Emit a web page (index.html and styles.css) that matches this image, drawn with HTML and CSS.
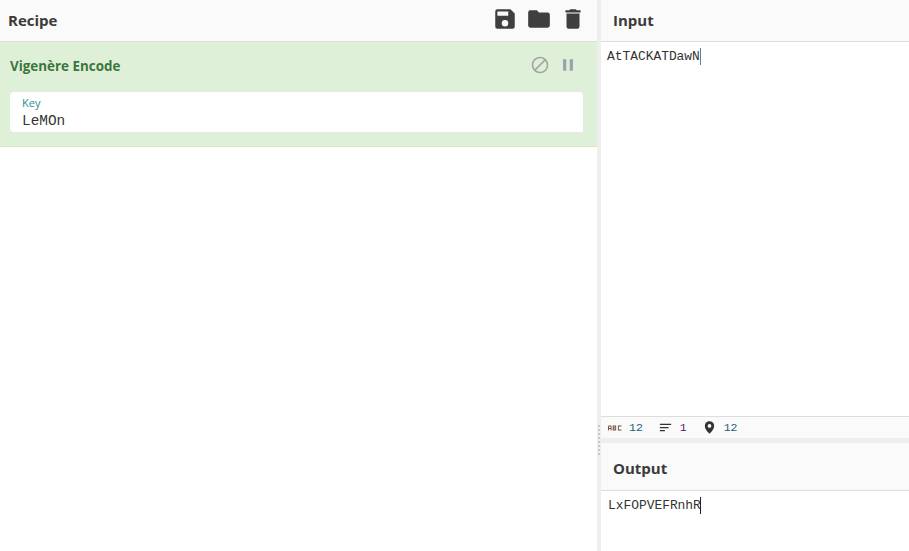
FILE: index.html
```html
<!DOCTYPE html>
<html lang="en">
<head>
<meta charset="utf-8">
<title>CyberChef</title>
<link rel="stylesheet" href="styles.css">
</head>
<body>
<div class="app">
  <section class="recipe">
    <header class="title-bar recipe-bar">
      <h1 class="title">Recipe</h1>
      <div class="actions">
        <svg class="act" viewBox="0 0 24 24"><path d="M17 3H5a2 2 0 0 0-2 2v14a2 2 0 0 0 2 2h14a2 2 0 0 0 2-2V7l-4-4zm-5 16a3 3 0 1 1 0-6 3 3 0 0 1 0 6zm3-10H5V5h10v4z"/></svg>
        <svg class="act" viewBox="0 0 24 24"><path d="M10 4H4a2 2 0 0 0-2 2v12a2 2 0 0 0 2 2h16a2 2 0 0 0 2-2V8a2 2 0 0 0-2-2h-8l-2-2z"/></svg>
        <svg class="act" viewBox="0 0 24 24"><path d="M6 19a2 2 0 0 0 2 2h8a2 2 0 0 0 2-2V7H6v12zM19 4h-3.500l-1-1h-5l-1 1H5v2h14V4z"/></svg>
      </div>
    </header>
    <div class="op">
      <div class="op-head">
        <span class="op-name">Vigenère Encode</span>
        <div class="op-controls">
          <svg class="ctl" viewBox="0 0 24 24"><path d="M12 2a10 10 0 1 0 0 20 10 10 0 0 0 0-20zM4 12a8 8 0 0 1 12.900-6.300L5.700 16.900A8 8 0 0 1 4 12zm8 8a8 8 0 0 1-4.900-1.700L18.300 7.100A8 8 0 0 1 12 20z"/></svg>
          <svg class="ctl pause" viewBox="0 0 24 24"><path d="M6 19h4V5H6v14zm8-14v14h4V5h-4z"/></svg>
        </div>
      </div>
      <div class="field">
        <label class="field-label">Key</label>
        <div class="field-value">LeMOn</div>
      </div>
    </div>
  </section>
  <div class="gutter"></div>
  <section class="io">
    <div class="pane input-pane">
      <header class="title-bar io-bar"><h2 class="title">Input</h2></header>
      <div class="text-area"><span class="text">AtTACKATDawN</span><span class="caret"></span></div>
      <footer class="status">
        <span class="stat">
          <svg class="stat-icon abc" viewBox="0 0 24 12" preserveAspectRatio="none"><path d="M0 11V3l1-2h4l1 2v8H4.500V8h-3v3zm1.500-5h3V3h-3zM8 1h5l1 1v3l-1 1 1 1v3l-1 1H8zm1.500 2v2h3V3zm0 4v2h3V7zM17 1h6v2h-4.500v6H23v2h-6z"/></svg>
          <span class="num">12</span>
        </span>
        <span class="stat">
          <svg class="stat-icon" viewBox="0 0 24 24"><path d="M3 6h18v2H3zM3 11h14v2H3zM3 16h8v2H3z"/></svg>
          <span class="num lines">1</span>
        </span>
        <span class="stat">
          <svg class="stat-icon" viewBox="0 0 24 24"><path d="M12 2a7.500 7.500 0 0 0-7.500 7.500C4.500 15 12 22 12 22s7.500-7 7.500-12.500A7.500 7.500 0 0 0 12 2zm0 10.500a3 3 0 1 1 0-6 3 3 0 0 1 0 6z"/></svg>
          <span class="num">12</span>
        </span>
      </footer>
    </div>
    <div class="io-gutter"></div>
    <div class="pane output-pane">
      <header class="title-bar io-bar"><h2 class="title">Output</h2></header>
      <div class="text-area"><span class="text">LxFOPVEFRnhR</span><span class="caret dark"></span></div>
    </div>
  </section>
</div>
</body>
</html>
```
FILE: styles.css
```css
* { box-sizing: border-box; }
html, body { margin: 0; height: 100%; overflow: hidden; background: #fff; }
.app { display: flex; width: 909px; height: 551px; font-family: "Open Sans", sans-serif; color: #333; }
.recipe { width: 597px; display: flex; flex-direction: column; }
.gutter { width: 4px; background: #eeeeee; position: relative; }
.gutter::after {
  content: ""; position: absolute; left: 1px; top: 425px; width: 2px; height: 32px;
  background: repeating-linear-gradient(to bottom, #c8c8c8 0 2px, transparent 2px 4px);
}
.io { width: 308px; display: flex; flex-direction: column; }
.title-bar {
  display: flex; align-items: center; justify-content: space-between;
  height: 42px; background: #fafafa; border-bottom: 1px solid #dddddd;
}
.recipe-bar { padding: 0 11px 0 8px; }
.io-bar { padding: 0 12px; }
.title { margin: 0 0 2px; font-size: 15px; font-weight: 700; color: #3a3a3a; }
.output-pane .title { margin: 0; }
.actions { display: flex; gap: 8px; margin-top: -3px; }
.act { width: 26px; height: 26px; fill: #3f3f3f; display: block; }
.op { height: 105px; background: #dff0d8; border-bottom: 1px solid #d6e9c6; padding: 0 14px 0 10px; }
.op-head { display: flex; justify-content: space-between; align-items: center; height: 50px; }
.op-name { font-size: 13.400px; font-weight: 700; color: #3c763d; margin-bottom: 2px; }
.op-controls { display: flex; align-items: center; gap: 8px; margin-top: -4px; margin-right: 5px; }
.ctl { width: 20px; height: 20px; fill: #a5a5a5; display: block; }
.pause { fill: #9aa5ab; }
.field { height: 40px; background: #fff; border-radius: 4px 4px 0 4px; padding: 4px 13px 0 12px; }
.field-label { display: block; font-size: 11px; line-height: 13px; color: #1f8f8a; }
.field-value { font-family: "Liberation Mono", monospace; font-size: 14.400px; line-height: 17px; margin-top: 4px; color: #333; }
.pane { display: flex; flex-direction: column; }
.input-pane { height: 438px; }
.output-pane { flex: 1; }
.output-pane .title-bar { height: 48px; padding-top: 3px; }
.io-gutter { height: 5px; background: #eeeeee; }
.text-area { flex: 1; padding: 6px 6px 0; display: flex; align-items: flex-start; background: #fff; }
.text { font-family: "Liberation Mono", monospace; font-size: 12.900px; line-height: 17px; color: #333; }
.output-pane .text { margin-left: 1px; margin-right: -1px; }
.caret { width: 1px; height: 17px; background: #5f7f95; }
.caret.dark { background: #222; }
.status {
  height: 22px; display: flex; align-items: center; gap: 15px; padding: 0 6px 0 7px;
  background: #fafafa; border-top: 1px solid #dddddd;
  font-family: "Liberation Mono", monospace; font-size: 11.500px; color: #333;
}
.stat { display: flex; align-items: center; gap: 7px; }
.stat-icon { width: 15px; height: 15px; fill: #333; display: block; }
.abc { width: 14px; height: 6px; fill: #6b4a3a; }
.num { color: #1a5e7a; }
.num.lines { color: #5a1a5e; }
```
